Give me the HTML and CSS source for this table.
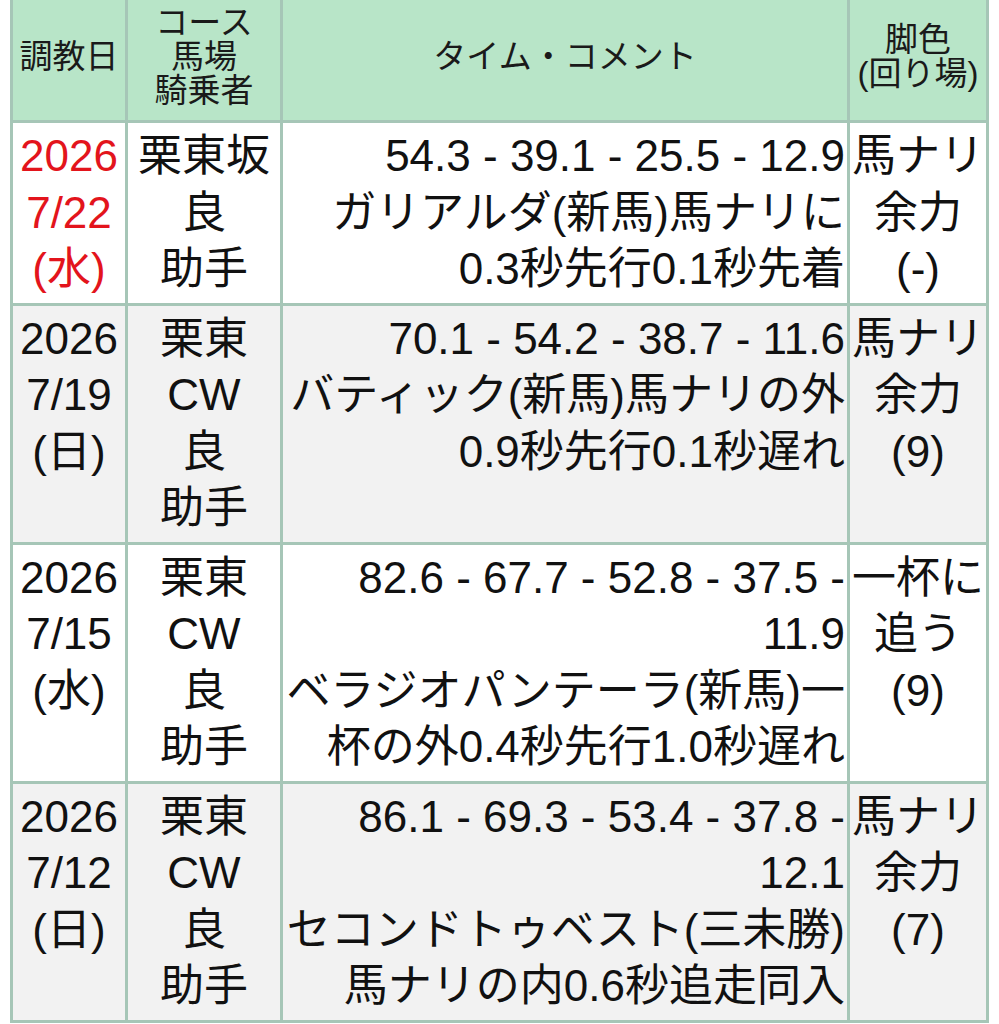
FILE: index.html
```html
<!DOCTYPE html>
<html lang="ja">
<head>
<meta charset="utf-8">
<title>調教</title>
<link rel="stylesheet" href="styles.css">
</head>
<body>
<table class="train">
  <thead>
    <tr>
      <th class="c-date">調教日</th>
      <th class="c-course">コース<br>馬場<br>騎乗者</th>
      <th class="c-time">タイム・コメント</th>
      <th class="c-leg">脚色<br>(回り場)</th>
    </tr>
  </thead>
  <tbody>
    <tr class="odd">
      <td class="date red">2026<br>7/22<br>(水)</td>
      <td class="course">栗東坂<br>良<br>助手</td>
      <td class="time">54.3 - 39.1 - 25.5 - 12.9<br>ガリアルダ(新馬)馬ナリに<br>0.3秒先行0.1秒先着</td>
      <td class="leg">馬ナリ<br>余力<br>(-)</td>
    </tr>
    <tr class="even">
      <td class="date">2026<br>7/19<br>(日)</td>
      <td class="course">栗東<br>CW<br>良<br>助手</td>
      <td class="time">70.1 - 54.2 - 38.7 - 11.6<br>バティック(新馬)馬ナリの外<br>0.9秒先行0.1秒遅れ</td>
      <td class="leg">馬ナリ<br>余力<br>(9)</td>
    </tr>
    <tr class="odd">
      <td class="date">2026<br>7/15<br>(水)</td>
      <td class="course">栗東<br>CW<br>良<br>助手</td>
      <td class="time">82.6 - 67.7 - 52.8 - 37.5 -<br>11.9<br>ベラジオパンテーラ(新馬)一<br>杯の外0.4秒先行1.0秒遅れ</td>
      <td class="leg">一杯に<br>追う<br>(9)</td>
    </tr>
    <tr class="even">
      <td class="date">2026<br>7/12<br>(日)</td>
      <td class="course">栗東<br>CW<br>良<br>助手</td>
      <td class="time">86.1 - 69.3 - 53.4 - 37.8 -<br>12.1<br>セコンドトゥベスト(三未勝)<br>馬ナリの内0.6秒追走同入</td>
      <td class="leg">馬ナリ<br>余力<br>(7)</td>
    </tr>
  </tbody>
</table>
</body>
</html>
```

FILE: styles.css
```css
html, body {
  margin: 0;
  padding: 0;
  background: #ffffff;
}

body {
  font-family: "Liberation Sans", "Noto Sans CJK JP", sans-serif;
  color: #111111;
}

.train {
  margin-left: 10px;
  width: 979px;
  table-layout: fixed;
  border-collapse: separate;
  border-spacing: 0;
  border-left: 3px solid #a6c6b7;
}

.train th,
.train td {
  box-sizing: border-box;
  border-right: 3px solid #a6c6b7;
  border-bottom: 3px solid #a6c6b7;
  white-space: nowrap;
  overflow: visible;
}

.train th {
  background: #b8e5c8;
  font-weight: normal;
  font-size: 33px;
  line-height: 34px;
  padding: 6px 0 12px;
  text-align: center;
  vertical-align: middle;
  color: #1a1a1a;
}

.c-date { width: 115px; }
.c-course { width: 155px; }
.c-time { width: 567px; }
.c-leg { width: 139px; }

.train td {
  font-size: 44px;
  line-height: 56.5px;
  padding: 5px 0;
  vertical-align: top;
  text-align: center;
}

.train td.time {
  text-align: right;
  padding-right: 2px;
}

.train td.red {
  color: #e3141c;
}

.train tr.odd td { background: #ffffff; }
.train tr.even td { background: #f2f2f2; }
```
